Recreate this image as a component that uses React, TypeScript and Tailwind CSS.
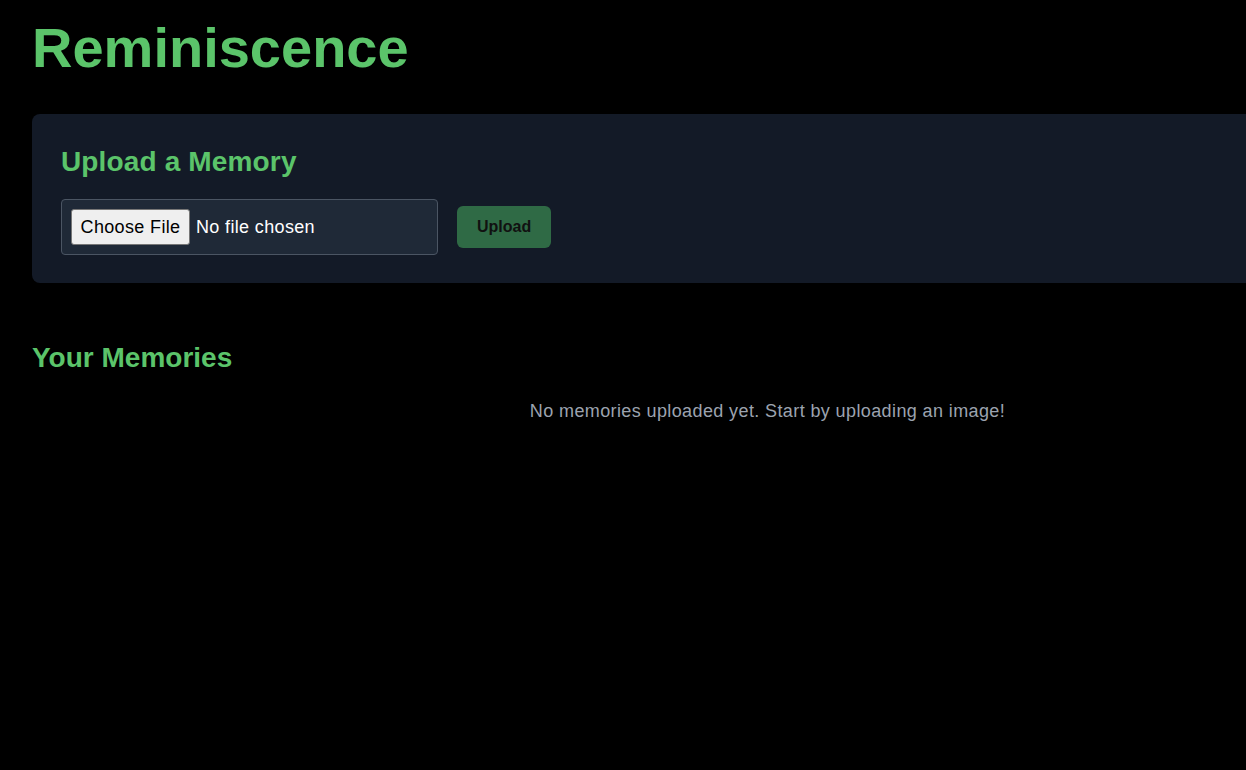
import React, { useRef, useState } from 'react';

const font = { fontFamily: '"Liberation Sans", Arial, sans-serif' };

const App: React.FC = () => {
  const inputRef = useRef<HTMLInputElement>(null);
  const [fileName, setFileName] = useState<string | null>(null);
  const [memories] = useState<string[]>([]);

  return (
    <div className="min-h-screen w-full overflow-hidden bg-black" style={font}>
      <div className="w-[1535px] px-8 pt-4">
        <h1 className="text-[56px] font-bold leading-[64px] text-[#5bc46a]">Reminiscence</h1>

        {/* Upload card */}
        <section className="mt-[34px] rounded-lg bg-[#131a27] py-7 pr-7 pl-[29px]">
          <h2 className="mb-[17px] text-[28px] font-bold leading-[40px] tracking-[0.15px] text-[#5bc46a]">
            Upload a Memory
          </h2>
          <div className="flex items-center gap-[19px]">
            <label className="flex h-[56px] w-[377px] cursor-pointer items-center gap-[6px] rounded border border-[#4b5563] bg-[#1f2937] px-[9px]">
              <input
                ref={inputRef}
                type="file"
                accept="image/*"
                className="hidden"
                onChange={(e) => setFileName(e.target.files?.[0]?.name ?? null)}
              />
              <span className="flex h-[36px] w-[119px] items-center justify-center rounded-[3px] border border-[#767676] bg-[#efefef] text-[18px] tracking-[0.35px] text-black">
                Choose File
              </span>
              <span className="text-[18px] tracking-[0.35px] text-white">{fileName ?? 'No file chosen'}</span>
            </label>
            <button className="h-[42px] rounded-md bg-[#2f6a45] px-5 text-base font-bold text-[#111]">Upload</button>
          </div>
        </section>

        {/* Gallery */}
        <section className="mt-[55px]">
          <h2 className="text-[28px] font-bold leading-[40px] text-[#5bc46a]">Your Memories</h2>
          {memories.length === 0 && (
            <p className="mt-[19px] text-center text-[18px] leading-[28px] tracking-[0.39px] text-[#9ca3af]">
              No memories uploaded yet. Start by uploading an image!
            </p>
          )}
        </section>
      </div>
    </div>
  );
};

export default App;
